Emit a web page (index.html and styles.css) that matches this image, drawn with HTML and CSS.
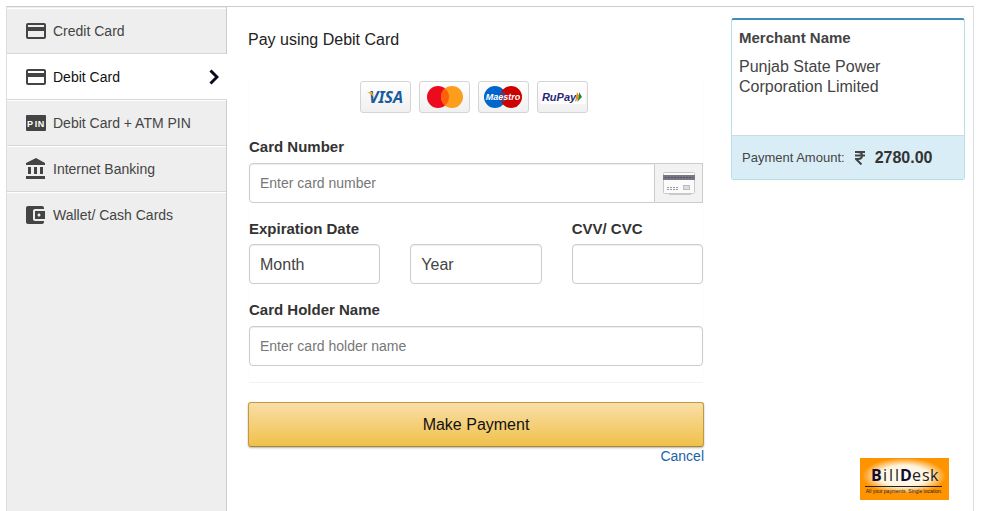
FILE: index.html
```html
<!DOCTYPE html>
<html lang="en">
<head>
    <meta charset="UTF-8">
    <meta name="viewport" content="width=device-width, initial-scale=1.0">
    <title>Pay using Debit Card</title>
    <link rel="stylesheet" href="styles.css">
</head>
<body>
    <div class="page">
        <nav class="menu">
            <a href="#credit" class="menu-item">
                <svg class="icon" viewBox="0 0 20 22"><path fill-rule="evenodd" d="M2 3h16q2 0 2 2v12q0 2-2 2H2q-2 0-2-2V5q0-2 2-2zM2 5v2h16V5zM2 11v6h16v-6z"/></svg>
                Credit Card
            </a>
            <a href="#debit" class="menu-item active">
                <svg class="icon" viewBox="0 0 20 22"><path fill-rule="evenodd" d="M2 3h16q2 0 2 2v12q0 2-2 2H2q-2 0-2-2V5q0-2 2-2zM2 5v2h16V5zM2 11v6h16v-6z"/></svg>
                Debit Card
                <svg class="arrow" viewBox="0 0 10 16"><path d="M1.5 1.5 8 8l-6.5 6.5"/></svg>
            </a>
            <a href="#pin" class="menu-item">
                <svg class="icon" viewBox="0 0 20 22"><rect y="3" width="20" height="16" rx="1"/><text class="pin-text" y="15"><tspan x="4">P</tspan><tspan x="10">I</tspan><tspan x="15">N</tspan></text></svg>
                Debit Card + ATM PIN
            </a>
            <a href="#netbanking" class="menu-item">
                <svg class="icon" viewBox="0 0 20 22"><path d="M10 0 0 5v2h19V5zM2 9h3v7H2zM8 9h3v7H8zM14 9h3v7h-3zM0 18h19v3H0z"/></svg>
                Internet Banking
            </a>
            <a href="#wallet" class="menu-item">
                <svg class="icon" viewBox="3 1 20 22"><path d="M21 18v1c0 1.1-.9 2-2 2H5c-1.11 0-2-.9-2-2V5c0-1.1.89-2 2-2h14c1.1 0 2 .9 2 2v1h-9c-1.11 0-2 .9-2 2v8c0 1.1.89 2 2 2h9zm-9-2h10V8H12v8zm4-2.5c-.83 0-1.5-.67-1.5-1.5s.67-1.5 1.5-1.5 1.5.67 1.5 1.5-.67 1.5-1.5 1.5z"/></svg>
                Wallet/ Cash Cards
            </a>
        </nav>

        <main class="payment">
            <h1>Pay using Debit Card</h1>
            <form>
                <div class="fields">
                    <div class="cards">
                        <svg class="card-logo" viewBox="0 0 49 30" role="img" aria-label="Visa">
                            <text class="visa" x="25" y="21">VISA</text>
                            <path fill="#f7a823" d="M6 10h5l2 6q-2-4-7-6z"/>
                        </svg>
                        <svg class="card-logo" viewBox="0 0 49 30" role="img" aria-label="Mastercard">
                            <circle cx="18" cy="15" r="11" fill="#eb0a1e"/>
                            <circle cx="32" cy="15" r="11" fill="#fc9d1c"/>
                            <path fill="#ff6108" d="M25 6.5a11 11 0 0 1 0 17a11 11 0 0 1 0-17z"/>
                        </svg>
                        <svg class="card-logo" viewBox="0 0 49 30" role="img" aria-label="Maestro">
                            <circle cx="16" cy="15" r="11" fill="#0066cb"/>
                            <circle cx="32" cy="15" r="11" fill="#cc0000"/>
                            <path stroke="#0066cb" d="M22 11h4M22 13h5M22 15h5M22 17h5M22 19h4"/>
                            <text class="maestro" x="24" y="18">Maestro</text>
                        </svg>
                        <svg class="card-logo" viewBox="0 0 49 30" role="img" aria-label="RuPay">
                            <rect x="3" y="9" width="44" height="13" fill="#fff"/>
                            <text class="rupay" x="21" y="19">RuPay</text>
                            <path fill="#f08a1c" d="m39 10 3 5-5 5z"/>
                            <path fill="#128a43" d="m41 10 3 5-5 5 2-5z"/>
                        </svg>
                    </div>

                    <label for="cardNumber">Card Number</label>
                    <div class="input-group">
                        <input type="text" id="cardNumber" placeholder="Enter card number">
                        <span class="addon">
                            <svg class="mini-card" viewBox="0 0 32 23">
                                <path stroke="#c9c9d2" d="M6 22.5h22"/>
                                <rect x=".5" y=".5" width="31" height="21" rx="1" fill="#fbfbfb" stroke="#c8c8c8"/>
                                <path fill="#77777d" d="M0 3h32v5H0z"/>
                                <path stroke="#55517c" stroke-dasharray="2 1" d="M2 5.5h28"/>
                                <path stroke="#999" stroke-dasharray="2 1" d="M4 15.5h12M4 17.5h11"/>
                                <rect x="20.5" y="13.5" width="6" height="4" fill="#ddd" stroke="#bbb"/>
                            </svg>
                        </span>
                    </div>

                    <div class="row">
                        <div>
                            <label for="month">Expiration Date</label>
                            <select id="month"><option>Month</option></select>
                        </div>
                        <div>
                            <select id="year" aria-label="Expiration year"><option>Year</option></select>
                        </div>
                        <div>
                            <label for="cvv">CVV/ CVC</label>
                            <input type="password" id="cvv">
                        </div>
                    </div>

                    <label for="holder">Card Holder Name</label>
                    <input type="text" id="holder" placeholder="Enter card holder name">
                </div>

                <button type="submit" class="pay-button">Make Payment</button>
                <a href="#cancel" class="cancel">Cancel</a>
            </form>
        </main>

        <aside class="side">
            <section class="summary">
                <div class="merchant">
                    <h2>Merchant Name</h2>
                    <p>Punjab State Power Corporation Limited</p>
                </div>
                <div class="amount">
                    <span>Payment Amount:</span>
                    <svg class="rupee" viewBox="0 0 10 14" role="img" aria-label="Rupees"><path d="M0 1h10M0 4.5h10M0 1h3q4 0 4 3.5T3 8H1l5.500 5.500"/></svg>
                    <strong>2780.00</strong>
                </div>
            </section>

            <svg class="billdesk" viewBox="0 0 89 42" role="img" aria-label="BillDesk">
                <defs>
                    <radialGradient id="glow">
                        <stop offset="0" stop-color="#fff"/>
                        <stop offset=".6" stop-color="#fff3dc"/>
                        <stop offset="1" stop-color="#ff9300"/>
                    </radialGradient>
                </defs>
                <rect width="89" height="42" fill="#ff9300"/>
                <ellipse cx="44" cy="18" rx="42" ry="18" fill="url(#glow)"/>
                <text class="brand" y="23"><tspan class="cap" x="11">B</tspan><tspan x="23">i</tspan><tspan x="29">l</tspan><tspan x="35">l</tspan><tspan class="cap" x="40">D</tspan><tspan x="52">e</tspan><tspan x="62">s</tspan><tspan x="70">k</tspan></text>
                <path stroke="#222" d="M5 28.5h77"/>
                <text class="tagline" x="44" y="35">All your payments. Single location.</text>
            </svg>
        </aside>
    </div>
</body>
</html>
```
FILE: styles.css
```css
* {
    box-sizing: border-box;
}
body {
    margin: 0;
    font-family: "Liberation Sans", Arial, sans-serif;
    font-size: 15px;
    color: #333;
    background: #fff;
}
.page {
    display: flex;
    min-height: calc(100vh - 6px);
    margin: 6px 7px 0 6px;
    border: 1px solid #ccc;
    border-color: #ccc #ddd;
    border-bottom: 0;
}

/* Payment methods */
.menu {
    width: 220px;
    flex-shrink: 0;
    padding-top: 1px;
    background: #eee;
    border-right: 1px solid #ccc;
}
.menu-item {
    display: flex;
    align-items: center;
    gap: 7px;
    height: 46px;
    padding: 0 8px 0 19px;
    border-top: 1px solid #fff;
    border-bottom: 1px solid #d8d8d8;
    font-size: 14px;
    color: #444;
    text-decoration: none;
}
.menu-item:last-child {
    border-bottom-color: transparent;
}
.menu-item.active {
    margin-right: -1px;
    background: #fff;
    color: #111;
}
.icon {
    width: 20px;
    height: 22px;
    fill: #444;
}
.pin-text {
    font-size: 9px;
    font-weight: bold;
    fill: #fff;
    text-anchor: middle;
}
.arrow {
    width: 10px;
    height: 16px;
    margin-left: auto;
    fill: none;
    stroke: #0b0b1c;
    stroke-width: 3;
}

/* Payment form */
.payment {
    flex: 1;
    min-width: 0;
    padding: 23px 27px 0 21px;
}
h1 {
    margin: 0;
    font-size: 16px;
    line-height: 20px;
    font-weight: normal;
    color: #222;
}
.fields {
    margin-top: 23px;
    padding-bottom: 16px;
    border: 1px solid #fdfdfd;
    border-bottom-color: #f3f3f3;
    border-radius: 3px;
}
.cards {
    display: flex;
    justify-content: center;
    gap: 8px;
    padding: 7px 4px 24px 0;
}
.card-logo {
    width: 51px;
    height: 32px;
    border: 1px solid #d4d4d4;
    border-radius: 3px;
    background: linear-gradient(#fff, #f0f0f0);
}
.visa {
    font: italic bold 16px "Noto Sans", sans-serif;
    fill: #1a5a9e;
    text-anchor: middle;
}
.maestro {
    font: italic bold 9px "Liberation Sans", sans-serif;
    fill: #fff;
    text-anchor: middle;
}
.rupay {
    font: italic bold 11px "Liberation Sans", sans-serif;
    fill: #292873;
    text-anchor: middle;
}
label {
    display: block;
    margin-bottom: 6px;
    font-weight: bold;
    line-height: 20px;
}
input,
select {
    display: block;
    width: 100%;
    height: 40px;
    padding: 0 10px;
    border: 1px solid #ccc;
    border-radius: 4px;
    background: #fff;
    box-shadow: inset 0 1px 1px rgba(0,0,0,0.07);
    font-family: inherit;
    font-size: 14px;
    color: #444;
}
select {
    appearance: none;
    font-size: 16px;
}
input::placeholder {
    color: #777;
}
.input-group {
    display: flex;
}
.input-group input {
    flex: 1;
    border-radius: 4px 0 0 4px;
}
.addon {
    display: flex;
    align-items: center;
    justify-content: center;
    width: 48px;
    border: 1px solid #ccc;
    border-left: 0;
    background: #f2f2f2;
}
.mini-card {
    width: 32px;
    height: 23px;
}
.row {
    display: grid;
    grid-template-columns: repeat(3, 1fr);
    gap: 30px;
    align-items: end;
    margin: 16px 0;
}
.row label {
    margin-bottom: 5px;
}
.pay-button {
    display: block;
    width: 100%;
    height: 45px;
    margin-top: 19px;
    border: 1px solid #c29a3c;
    border-bottom-color: #a88734;
    border-radius: 3px;
    background: linear-gradient(#f9dfa8, #f0c04a);
    box-shadow: 0 1px 2px rgba(0,0,0,0.3);
    font-family: inherit;
    font-size: 16px;
    color: #111;
    cursor: pointer;
}
.cancel {
    display: block;
    width: fit-content;
    margin-left: auto;
    font-size: 14px;
    line-height: 18px;
    color: #1c62a8;
    text-decoration: none;
}
.cancel:hover {
    text-decoration: underline;
}

/* Order summary */
.side {
    display: flex;
    flex-direction: column;
    width: 234px;
    flex-shrink: 0;
    margin: 11px 8px 11px 0;
}
.summary {
    border: 1px solid #b4e0e4;
    border-top: 2px solid #3c8dbc;
    border-radius: 3px;
}
.merchant {
    min-height: 115px;
    padding: 8px 7px;
}
.merchant h2 {
    margin: 0 0 9px;
    font-size: 15px;
    line-height: 20px;
    color: #444;
}
.merchant p {
    max-width: 180px;
    margin: 0;
    font-size: 16px;
    line-height: 20px;
    color: #444;
}
.amount {
    display: flex;
    align-items: center;
    gap: 10px;
    height: 44px;
    padding: 0 10px;
    border-top: 1px solid #ccdde2;
    background: #d9edf7;
    font-size: 13px;
    color: #444;
}
.amount strong {
    font-size: 16px;
    color: #333;
}
.rupee {
    width: 10px;
    height: 14px;
    fill: none;
    stroke: #444;
    stroke-width: 2;
}
.billdesk {
    width: 89px;
    height: 42px;
    margin: auto 16px 0 auto;
}
.brand {
    font-family: "Open Sans", sans-serif;
    font-size: 16px;
    fill: #222;
}
.cap {
    font-weight: bold;
    fill: #10102c;
}
.tagline {
    font-size: 5px;
    fill: #222;
    text-anchor: middle;
}
```
